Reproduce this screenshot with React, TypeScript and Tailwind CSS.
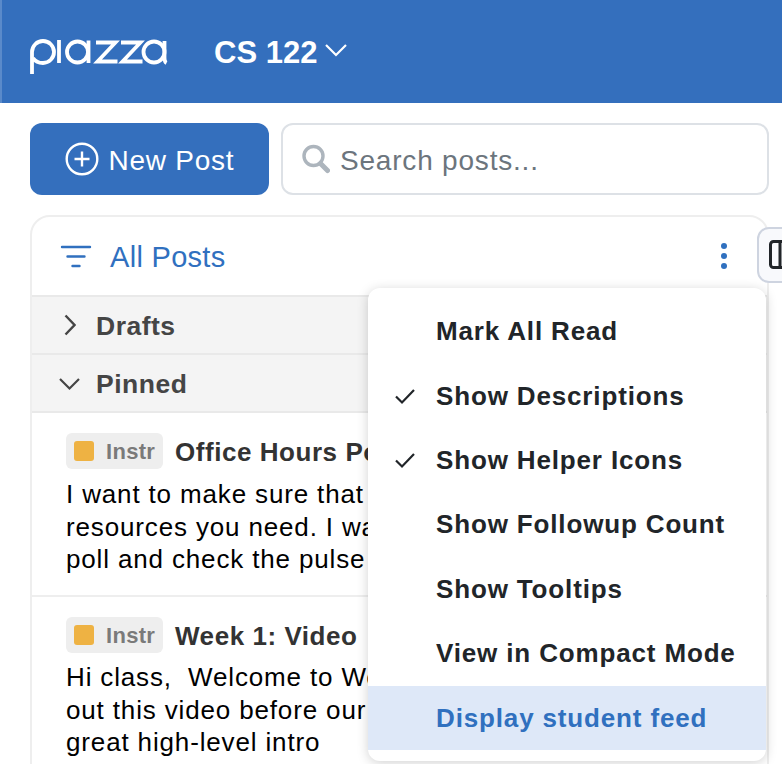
const F = '[font-family:"Liberation_Sans",Arial,sans-serif]';

function Logo() {
  return (
    <svg width="140" height="40" viewBox="28 36 140 40" fill="none" stroke="white" strokeWidth="3.800" className="mt-[11px] shrink-0">
      <path d="M32 73V51a11 11 0 1 1 11 11c-4 0-8-2-10-5" />
      <path d="M59 39v23" />
      <circle cx="77.500" cy="51" r="10.500" />
      <path d="M88.500 39.500V62" />
      <path d="M96 41.500h19.500l-18 19h20" />
      <path d="M121 41.500h19.500l-18 19h20" />
      <circle cx="154" cy="51" r="10.500" />
      <path d="M164.500 40V57q0 4 2 5" />
    </svg>
  );
}

function Check() {
  return (
    <svg width="22" height="18" viewBox="0 0 22 18" fill="none" stroke="#212529" strokeWidth="2.200" className="absolute left-[26px] top-[50%] -translate-y-1/2">
      <path d="M2 9.500l6 6L20 3" />
    </svg>
  );
}

function MenuItem({ label, checked, active }: { label: string; checked?: boolean; active?: boolean }) {
  return (
    <div className={`relative flex h-[64.400px] items-center pl-[68px] text-[26px] font-bold tracking-[0.85px] ${active ? "bg-[#dee8f8] text-[#3070bf]" : "text-[#212529]"}`}>
      {checked && <Check />}
      {label}
    </div>
  );
}

function Post({ title, lines, border }: { title: string; lines: string[]; border?: boolean }) {
  return (
    <div className={border ? "border-b-2 border-[#eeeeee] pb-[19.500px] pl-[34px] pr-4 pt-5" : "pl-[34px] pr-4 pt-5"}>
      <div className="flex h-9 w-[302px] items-center gap-3 overflow-hidden">
        <div className="flex h-9 w-[97px] shrink-0 items-center gap-3 rounded-md bg-[#eeeeee] pl-2 text-[22px] font-bold tracking-[0.3px] text-[#7a7a7a]">
          <span className="h-5 w-5 shrink-0 rounded-[3px] bg-[#eeb243]" />
          Instr
        </div>
        <span className="whitespace-nowrap pt-[2px] text-[26px] font-bold tracking-[0.55px] text-[#333333]">{title}</span>
      </div>
      <div className={`w-[302px] overflow-hidden text-[26px] leading-[32.500px] tracking-[0.85px] text-black ${border ? "mt-[9px]" : "mt-2"}`}>
        {lines.map((l) => (
          <div key={l} className="whitespace-pre">{l}</div>
        ))}
      </div>
    </div>
  );
}

export default function App() {
  return (
    <div className={`relative h-[764px] w-[782px] overflow-hidden bg-white ${F}`}>
      <header className="flex h-[103px] items-center border-l-2 border-[#5a8aca] bg-[#346fbd] pl-[26px] text-white">
        <Logo />
        <div className="ml-[46px] flex items-center gap-[7px] pt-[3px] text-[31px] font-bold">
          CS 122
          <svg width="24" height="14" viewBox="0 0 24 14" fill="none" stroke="white" strokeWidth="2.200" className="mb-[6px]">
            <path d="M2 2l10 10L22 2" />
          </svg>
        </div>
      </header>

      <div className="flex gap-3 pl-[30px] pr-[13px] pt-5">
        <button className="flex h-[72px] w-[239px] items-center justify-center gap-[10px] rounded-xl bg-[#346fbd] text-[28px] tracking-[0.75px] text-white">
          <svg width="34" height="34" viewBox="0 0 34 34" fill="none" stroke="white" strokeWidth="2.400">
            <circle cx="17" cy="17" r="15.300" />
            <path d="M17 9.500v15M9.500 17h15" />
          </svg>
          <span className="pt-[4px]">New Post</span>
        </button>
        <div className="flex h-[72px] flex-1 items-center gap-[10px] rounded-xl border-2 border-[#dde1e6] pl-[19px] text-[28px] tracking-[0.8px] text-[#6c757d]">
          <svg width="28" height="30" viewBox="0 0 28 30" fill="none" stroke="#adb5bd">
            <circle cx="11.500" cy="12" r="9.500" strokeWidth="3.400" />
            <path d="M18.500 19.500l7 7" strokeWidth="5" strokeLinecap="round" />
          </svg>
          <span className="pt-[4px]">Search posts...</span>
        </div>
      </div>

      <div className="ml-[30px] mr-[13px] mt-5 h-[600px] rounded-t-[20px] border-2 border-[#eeeeee]">
        <div className="flex h-[78px] items-center pl-[28px] pt-[4px] text-[29px] tracking-[0.3px] text-[#3070bf]">
          <svg width="32" height="24" viewBox="0 0 32 24" fill="none" stroke="#3070bf" strokeWidth="2.400" strokeLinecap="round" className="mb-[3px] mr-[18px]">
            <path d="M2 2h28M7.500 11.500h17M12.500 21h7" />
          </svg>
          All Posts
        </div>
        <div className="flex h-[60px] items-center gap-[20px] border-y-2 border-[#e9e9e9] bg-[#f4f4f4] pl-[32px] pt-[4px] text-[26.500px] font-bold tracking-[0.5px] text-[#454545]">
          <svg width="12" height="22" viewBox="0 0 12 22" fill="none" stroke="#454545" strokeWidth="2.400" className="mb-[4px]">
            <path d="M1.500 1.500l9 9.500-9 9.500" />
          </svg>
          Drafts
        </div>
        <div className="flex h-[58px] items-center gap-[16px] border-b-2 border-[#e9e9e9] bg-[#f4f4f4] pl-[27px] pt-[4px] text-[26.500px] font-bold tracking-[0.5px] text-[#454545]">
          <svg width="21" height="14" viewBox="0 0 21 14" fill="none" stroke="#454545" strokeWidth="2.200" className="mb-[3px]">
            <path d="M1 2l9.500 9.500L20 2" />
          </svg>
          Pinned
        </div>
        <Post
          border
          title="Office Hours Po"
          lines={["I want to make sure that", "resources you need. I wa", "poll and check the pulse"]}
        />
        <Post
          title="Week 1: Video"
          lines={["Hi class,  Welcome to We", "out this video before our", "great high-level intro"]}
        />
      </div>

      <div className="absolute left-[721px] top-[243px] flex flex-col gap-1">
        <span className="h-[6px] w-[6px] rounded-full bg-[#3070bf]" />
        <span className="h-[6px] w-[6px] rounded-full bg-[#3070bf]" />
        <span className="h-[6px] w-[6px] rounded-full bg-[#3070bf]" />
      </div>

      <div className="absolute left-[757px] top-[227px] flex h-[56px] w-[40px] items-center rounded-xl border-2 border-[#ced4e0] bg-[#f8f9fc] pl-[10px]">
        <svg width="22" height="30" viewBox="0 0 22 30" fill="none" stroke="#212529" strokeWidth="3">
          <rect x="1.500" y="1.500" width="30" height="26" rx="3" />
          <path d="M11 1.500v26" />
        </svg>
      </div>

      <div className="absolute left-[368px] top-[288px] h-[473px] w-[398px] overflow-hidden rounded-xl bg-white pt-[11.500px] shadow-[0_2px_12px_rgba(0,0,0,0.18)]">
        <MenuItem label="Mark All Read" />
        <MenuItem label="Show Descriptions" checked />
        <MenuItem label="Show Helper Icons" checked />
        <MenuItem label="Show Followup Count" />
        <MenuItem label="Show Tooltips" />
        <MenuItem label="View in Compact Mode" />
        <MenuItem label="Display student feed" active />
      </div>
    </div>
  );
}
